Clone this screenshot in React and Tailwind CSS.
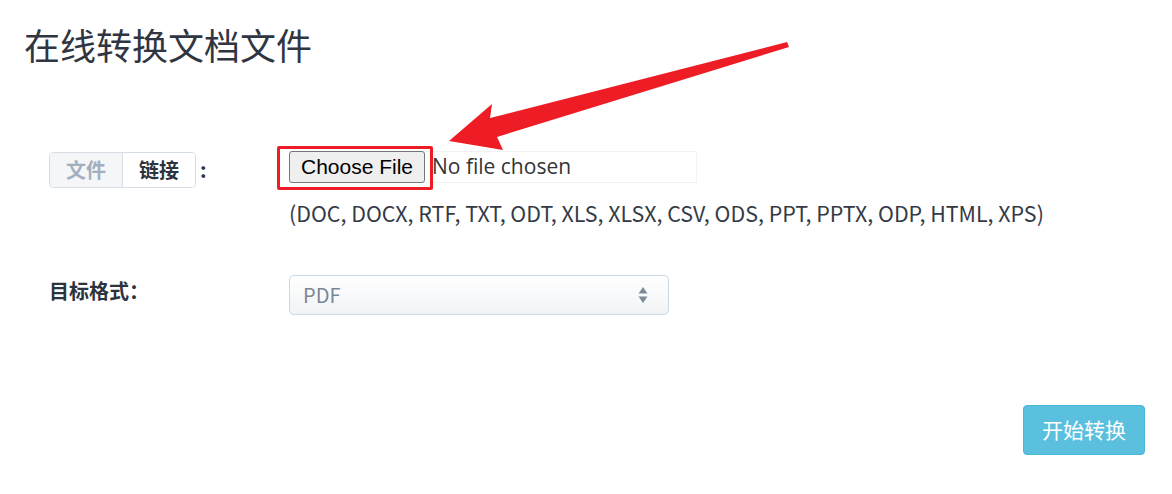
import React from 'react';

const SANS = { fontFamily: '"Noto Sans CJK SC", "Noto Sans", sans-serif' };

const FORMATS = 'DOC, DOCX, RTF, TXT, ODT, XLS, XLSX, CSV, ODS, PPT, PPTX, ODP, HTML, XPS';

// red annotation arrow drawn over the page
const Arrow = () => (
  <svg className="absolute left-0 top-0 pointer-events-none" width="1172" height="494">
    <polygon
      points="449,141 492,104 490,118 787,42 789,47 497,137 503,150"
      fill="#ee1c25"
    />
  </svg>
);

const SourceTabs = () => (
  <div className="flex items-center">
    <div className="flex h-[36px] rounded-[4px] border border-[#d5dee7] overflow-hidden text-[20px] font-bold">
      <span className="w-[73px] flex items-center justify-center bg-[#f4f6f8] text-[#a3afbf] border-r border-[#d5dee7]">
        文件
      </span>
      <span className="w-[72px] flex items-center justify-center bg-white text-[#2d333d]">链接</span>
    </div>
    <span className="ml-[4px] text-[20px] font-bold text-[#2d333d]">:</span>
  </div>
);

const FilePicker = () => (
  <div className="relative">
    <div className="flex items-center w-[408px] h-[32px] border border-l-0 border-[#f2f2f2]">
      <span
        className="h-[32px] w-[136px] -my-px flex items-center justify-center rounded-[3px] border border-[#767676] bg-[#efefef] text-[21px] text-black"
        style={{ fontFamily: '"Liberation Sans", Arial, sans-serif' }}
      >
        Choose File
      </span>
      <span
        className="ml-[7px] text-[21px] text-[#333]"
        style={{ fontFamily: '"Open Sans", sans-serif' }}
      >
        No file chosen
      </span>
    </div>
    <div className="absolute left-[-12px] top-[-5px] w-[156px] h-[44px] border-[3px] border-[#ee1c25] rounded-[2px]" />
  </div>
);

export default function App() {
  return (
    <div className="relative w-[1172px] h-[494px] bg-white overflow-hidden text-[#2d333d]" style={SANS}>
      <h1 className="pl-[24px] pt-[20px] text-[36px] leading-[48px] font-normal text-[#2f3541]">在线转换文档文件</h1>

      <div className="mt-[84px] pl-[49px] flex">
        <div className="w-[240px]">
          <SourceTabs />
        </div>
        <div className="-mt-px">
          <FilePicker />
          <p className="mt-[15px] text-[21.4px] leading-[30px] text-[#333a45]">({FORMATS})</p>
        </div>
      </div>

      <div className="mt-[47px] pl-[49px] flex items-center">
        <div className="w-[240px] text-[20px] font-bold text-[#2d333d] -mt-[8px]">目标格式：</div>
        <div className="w-[380px] h-[40px] rounded-[5px] border border-[#cbd9e4] bg-gradient-to-b from-white to-[#f1f3f5] flex items-center justify-between pl-[13px] pr-[20px]">
          <span className="text-[20px] text-[#7c8795]">PDF</span>
          <svg width="10" height="18" viewBox="0 0 10 18">
            <polygon points="5,1 9.5,7.5 0.5,7.5" fill="#7f8a96" />
            <polygon points="5,17 9.5,10.5 0.5,10.5" fill="#7f8a96" />
          </svg>
        </div>
      </div>

      <div className="absolute right-[27px] top-[405px]">
        <button className="w-[122px] h-[50px] rounded-[4px] border border-[#46b8da] bg-[#5bc0de] text-white text-[21px]">
          开始转换
        </button>
      </div>

      <Arrow />
    </div>
  );
}
